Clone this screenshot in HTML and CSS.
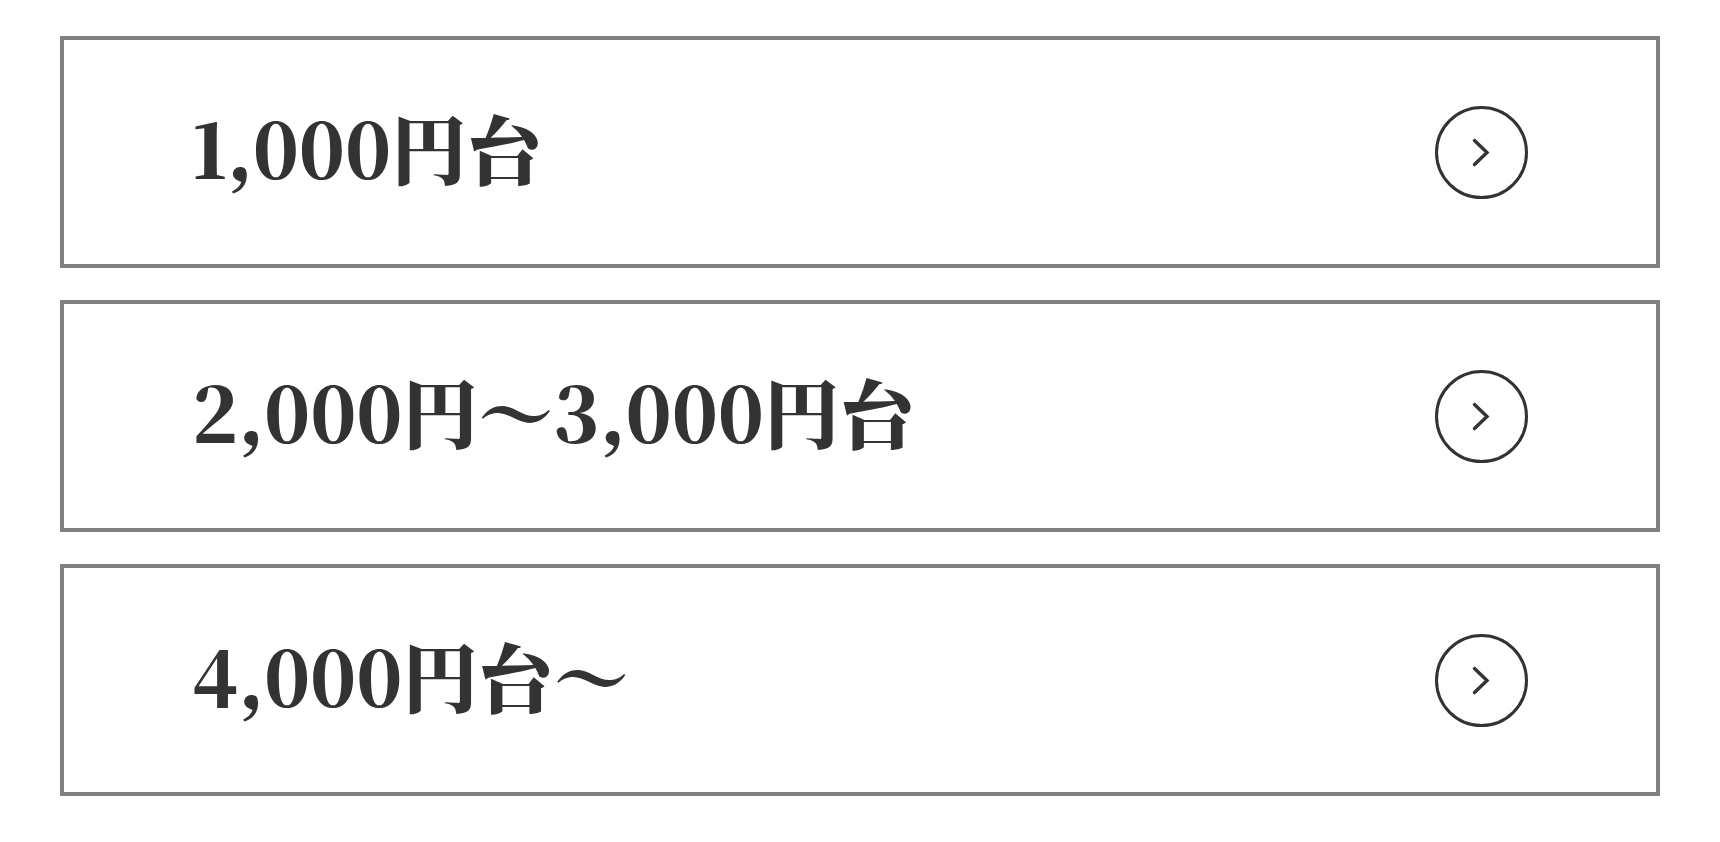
FILE: index.html
```html
<!DOCTYPE html>
<html lang="ja">
<head>
<meta charset="utf-8">
<title>価格帯から探す</title>
<link rel="stylesheet" href="styles.css">
</head>
<body>
<ul class="price-list">
  <li>
    <a class="price-item" href="#">
      <span class="price-label">1,000円台</span>
      <svg class="arrow" viewBox="0 0 93 93" aria-hidden="true">
        <circle cx="46.5" cy="46.5" r="45" />
        <path d="M39.5 34.5 L52 46.5 L39.5 58.5" />
      </svg>
    </a>
  </li>
  <li>
    <a class="price-item" href="#">
      <span class="price-label">2,000円〜3,000円台</span>
      <svg class="arrow" viewBox="0 0 93 93" aria-hidden="true">
        <circle cx="46.5" cy="46.5" r="45" />
        <path d="M39.5 34.5 L52 46.5 L39.5 58.5" />
      </svg>
    </a>
  </li>
  <li>
    <a class="price-item" href="#">
      <span class="price-label">4,000円台〜</span>
      <svg class="arrow" viewBox="0 0 93 93" aria-hidden="true">
        <circle cx="46.5" cy="46.5" r="45" />
        <path d="M39.5 34.5 L52 46.5 L39.5 58.5" />
      </svg>
    </a>
  </li>
</ul>
</body>
</html>
```
FILE: styles.css
```css
html, body {
  margin: 0;
  background: #fff;
}

.price-list {
  list-style: none;
  margin: 0;
  padding: 36px 60px;
  display: flex;
  flex-direction: column;
  gap: 32px;
}

.price-item {
  box-sizing: border-box;
  height: 232px;
  border: 4px solid #808080;
  padding: 0 128px;
  display: flex;
  align-items: center;
  justify-content: space-between;
  color: #333;
  text-decoration: none;
}

.price-label {
  font-family: "Noto Serif CJK JP", "Liberation Serif", serif;
  font-weight: 900;
  font-size: 75.5px;
  line-height: 1;
  padding-bottom: 10px;
  white-space: nowrap;
}

.arrow {
  width: 93px;
  height: 93px;
  flex: none;
  fill: none;
  stroke: #333;
}

.arrow circle {
  stroke-width: 3;
}

.arrow path {
  stroke-width: 3.4;
  stroke-linecap: round;
  stroke-linejoin: miter;
}
```
